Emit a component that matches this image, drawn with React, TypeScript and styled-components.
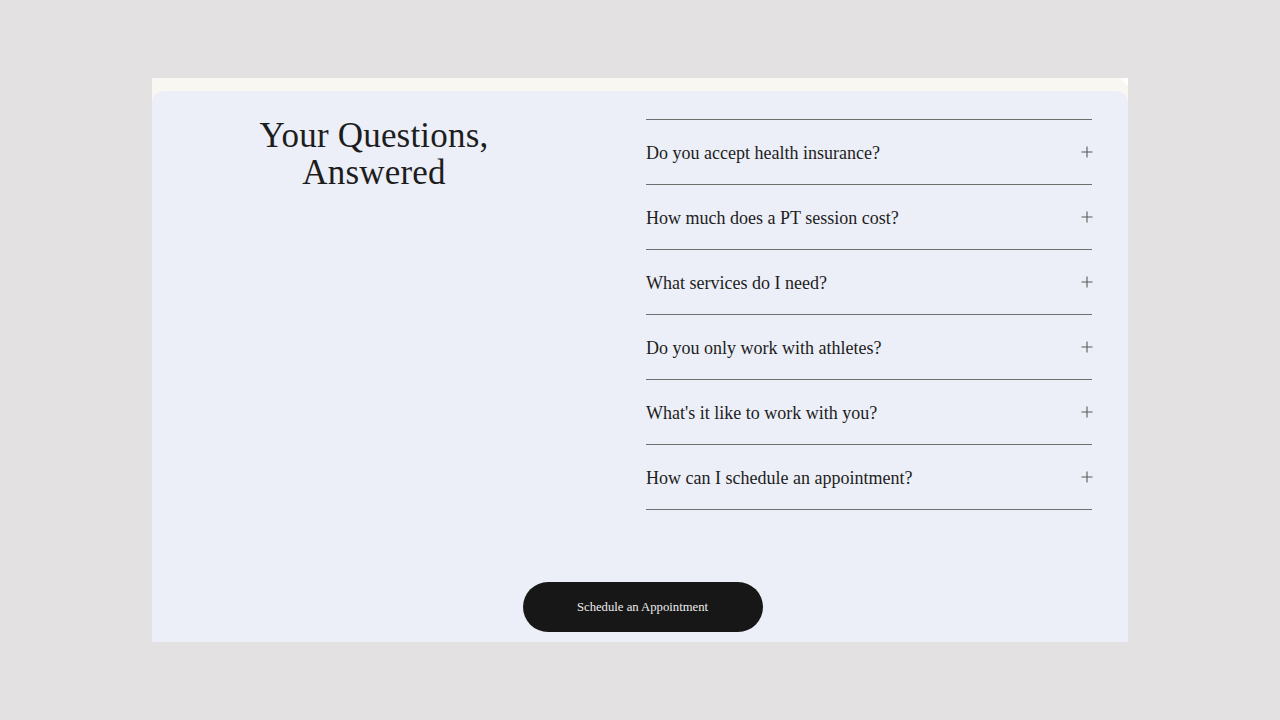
import styled, { createGlobalStyle } from 'styled-components'

const Global = createGlobalStyle`
	html, body {
		margin: 0;
		padding: 0;
		background: #e3e1e1;
	}
	#root {
		padding-top: 78px;
		min-height: 720px;
		box-sizing: border-box;
	}
`

const Frame = styled.section`
	position: relative;
	width: 976px;
	margin: 0 auto;
	padding-top: 13px;
	background: #f8f7f1;

	&::after {
		content: '';
		position: absolute;
		top: 0;
		right: 0;
		border-style: solid;
		border-width: 0 8px 8px 0;
		border-color: transparent #ffffff transparent transparent;
	}
`

const Panel = styled.div`
	height: 551px;
	background: #eceff7;
	border-radius: 12px 12px 0 0;
	display: flex;
	flex-direction: column;
	font-family: 'Liberation Serif', 'Times New Roman', serif;
	color: #1d1d1d;
`

const Columns = styled.div`
	display: grid;
	grid-template-columns: 444px 446px;
	column-gap: 50px;
	padding-top: 26px;
`

const Heading = styled.h2`
	margin: 0;
	text-align: center;
	font-weight: 400;
	font-size: 35px;
	line-height: 37px;
	letter-spacing: 0.2px;
`

const List = styled.ul`
	list-style: none;
	margin: 2px 0 0;
	padding: 0;
	border-top: 1px solid #6f6f6f;
`

const Item = styled.li`
	height: 64px;
	display: flex;
	align-items: center;
	justify-content: space-between;
	border-bottom: 1px solid #6f6f6f;
	font-size: 18px;
	cursor: pointer;
`

const Question = styled.span`
	padding-top: 2px;
`

const PlusIcon = styled.svg`
	width: 12px;
	height: 12px;
	flex: none;
	margin-right: -1px;
	margin-top: -1px;
`

const ButtonRow = styled.div`
	display: flex;
	justify-content: center;
	margin-top: 72px;
	padding-left: 5px;
`

const Button = styled.button`
	width: 240px;
	height: 50px;
	border: none;
	border-radius: 25px;
	background: #171717;
	color: #ededed;
	font-family: 'Liberation Serif', 'Times New Roman', serif;
	font-size: 12.7px;
	cursor: pointer;
`

const questions = [
	'Do you accept health insurance?',
	'How much does a PT session cost?',
	'What services do I need?',
	'Do you only work with athletes?',
	"What's it like to work with you?",
	'How can I schedule an appointment?',
]

const Plus = () => (
	<PlusIcon viewBox="0 0 12 12">
		<path d="M6 0.5V11.5M0.5 6H11.5" stroke="#5a5a5a" strokeWidth="1.1" fill="none" />
	</PlusIcon>
)

export default function App() {
	return (
		<>
			<Global />
			<Frame>
				<Panel>
					<Columns>
						<Heading>
							Your Questions,
							<br />
							Answered
						</Heading>
						<List>
							{questions.map(q => (
								<Item key={q}>
									<Question>{q}</Question>
									<Plus />
								</Item>
							))}
						</List>
					</Columns>
					<ButtonRow>
						<Button>Schedule an Appointment</Button>
					</ButtonRow>
				</Panel>
			</Frame>
		</>
	)
}
